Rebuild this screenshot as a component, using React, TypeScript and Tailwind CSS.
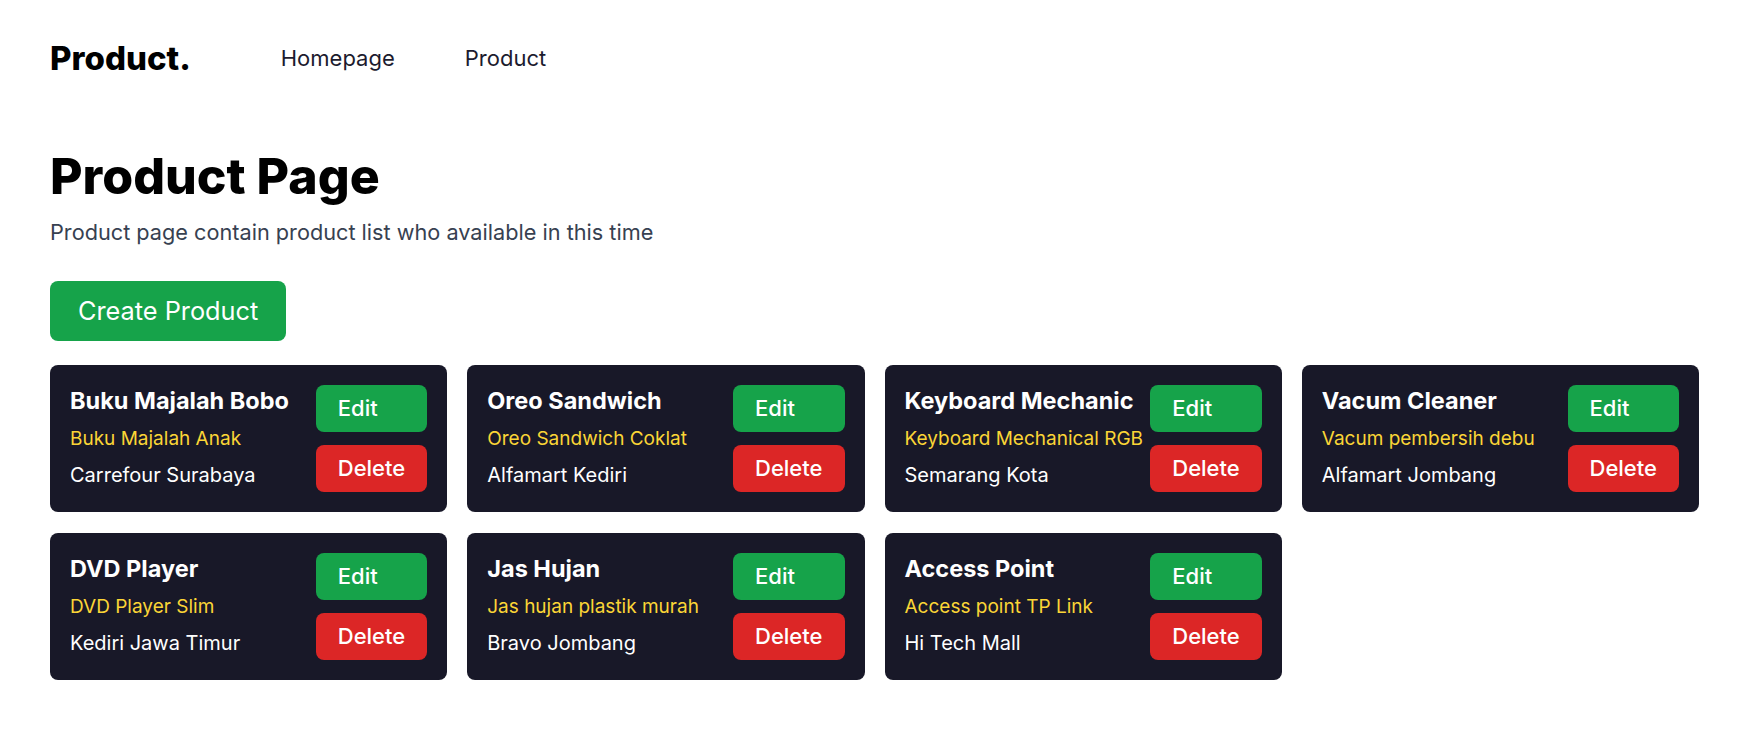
import React from 'react';

const products = [
  { id: 1, name: "Buku Majalah Bobo", description: "Buku Majalah Anak", location: "Carrefour Surabaya" },
  { id: 2, name: "Oreo Sandwich", description: "Oreo Sandwich Coklat", location: "Alfamart Kediri" },
  { id: 3, name: "Keyboard Mechanic", description: "Keyboard Mechanical RGB", location: "Semarang Kota" },
  { id: 4, name: "Vacum Cleaner", description: "Vacum pembersih debu", location: "Alfamart Jombang" },
  { id: 5, name: "DVD Player", description: "DVD Player Slim", location: "Kediri Jawa Timur" },
  { id: 6, name: "Jas Hujan", description: "Jas hujan plastik murah", location: "Bravo Jombang" },
  { id: 7, name: "Access Point", description: "Access point TP Link", location: "Hi Tech Mall" },
];

const App: React.FC = () => {
  return (
    <div className="min-h-screen bg-white px-[50px] font-['Inter','Noto_Sans',sans-serif]">
      {/* Navbar */}
      <header className="flex items-center pt-[38px]">
        <h1 className="text-[33px] leading-[40px] font-extrabold text-black">Product.</h1>
        <nav className="ml-[90px] flex items-center gap-[70px] text-[22px] leading-[40px] text-[#1c1b2e]">
          <a href="#">Homepage</a>
          <a href="#">Product</a>
        </nav>
      </header>

      <main className="mt-[73px]">
        <h2 className="text-[50px] leading-[50px] font-extrabold text-black">Product Page</h2>
        <p className="mt-[17px] text-[21.7px] leading-[28px] text-[#374151]">
          Product page contain product list who available in this time
        </p>

        <button className="mt-[35px] h-[60px] rounded-lg bg-[#16a34a] px-[28px] text-[25.3px] text-white">
          Create Product
        </button>

        <div className="mt-[24px] grid grid-cols-4 gap-x-[20px] gap-y-[21px]">
          {products.map((product) => (
            <div key={product.id} className="flex justify-between rounded-lg bg-[#181828] p-[20px]">
              <div className="space-y-2 whitespace-nowrap">
                <h3 className="text-[23.5px] leading-[32px] font-bold text-white">{product.name}</h3>
                <p className="text-[19px] leading-[28px] text-[#fbd536]">{product.description}</p>
                <p className="text-[20px] leading-[28px] text-white">{product.location}</p>
              </div>
              <div className="flex shrink-0 flex-col gap-[13px]">
                <button className="h-[47px] rounded-lg bg-[#16a34a] px-[22px] text-left text-[22px] font-medium text-white">
                  Edit
                </button>
                <button className="h-[47px] rounded-lg bg-[#dc2626] px-[22px] text-left text-[22px] font-medium text-white">
                  Delete
                </button>
              </div>
            </div>
          ))}
        </div>
      </main>
    </div>
  );
};

export default App;
